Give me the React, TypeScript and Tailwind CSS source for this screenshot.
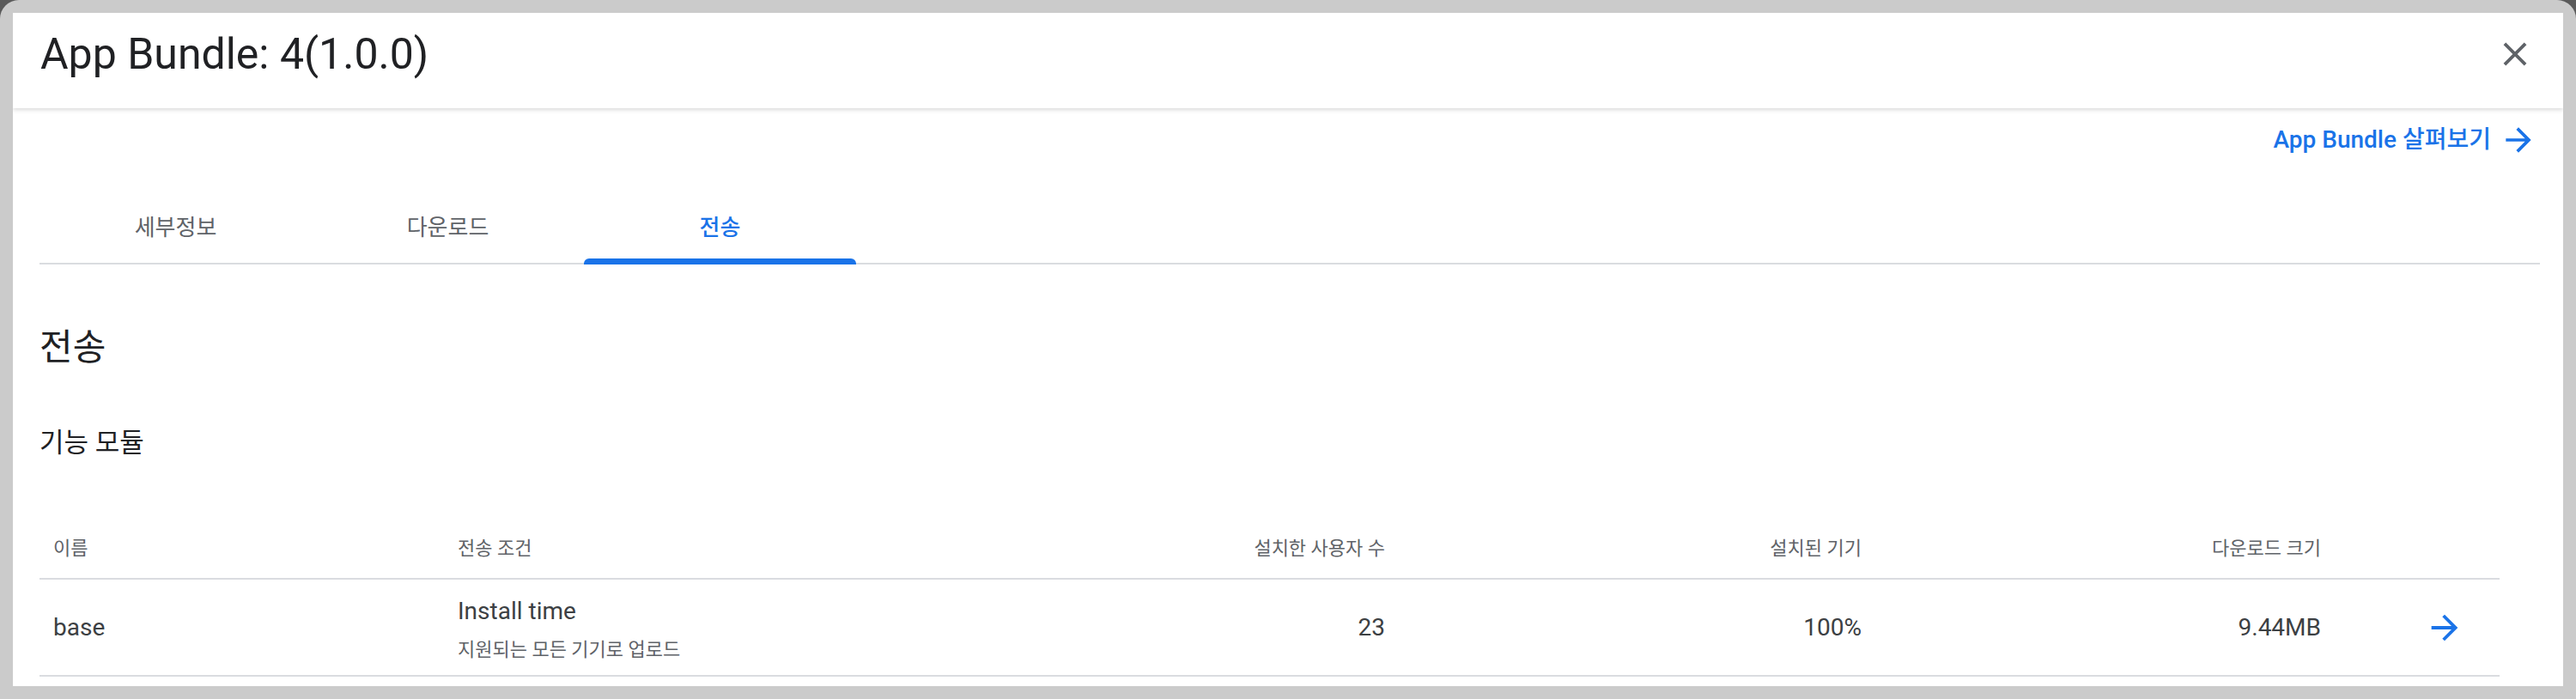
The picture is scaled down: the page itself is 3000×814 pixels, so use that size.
import React from "react";

const FONT = { fontFamily: 'Roboto, "Noto Sans CJK KR", sans-serif' };

function ArrowForward({ className }: { className?: string }) {
  return (
    <svg viewBox="0 0 24 24" className={className} fill="currentColor">
      <path d="M12 4l-1.41 1.41L16.17 11H4v2h12.17l-5.58 5.59L12 20l8-8z" />
    </svg>
  );
}

function CloseIcon({ className }: { className?: string }) {
  return (
    <svg viewBox="0 0 24 24" className={className} fill="currentColor">
      <path d="M19 6.41L17.59 5 12 10.59 6.41 5 5 6.41 10.59 12 5 17.59 6.41 19 12 13.41 17.59 19 19 17.59 13.41 12z" />
    </svg>
  );
}

export default function App() {
  const tabs = ["세부정보", "다운로드", "전송"];
  return (
    <div className="w-[3000px] h-[814px] bg-[#5a5a5a]" style={FONT}>
      <div className="w-full h-full bg-[#cbcbcb] rounded-t-[22px] p-[15px]">
        <div className="w-full h-full bg-white overflow-hidden flex flex-col">
          {/* Header */}
          <div className="h-[111px] shrink-0 flex items-start justify-between pl-[32px] pr-[28px] pt-[20px] shadow-[0_2px_5px_rgba(0,0,0,0.15)] relative z-10">
            <div className="h-[56px] flex items-center text-[50px] leading-[56px] text-[#202124]">
              App Bundle: 4(1.0.0)
            </div>
            <div className="h-[56px] w-[56px] flex items-center justify-center text-[#5f6368]">
              <CloseIcon className="w-[46px] h-[46px]" />
            </div>
          </div>

          {/* Link row */}
          <div className="flex justify-end pt-[17px] pr-[30px]">
            <div className="h-[40px] flex items-center gap-[10px] text-[#1a73e8] text-[28px] font-medium">
              <span>App Bundle 살펴보기</span>
              <ArrowForward className="w-[44px] h-[44px]" />
            </div>
          </div>

          {/* Tabs */}
          <div className="mt-[47px] ml-[31px] mr-[27px] flex border-b-2 border-[#dadce0] h-[78px]">
            {tabs.map((t, i) => {
              const active = i === 2;
              return (
                <div
                  key={t}
                  className={
                    "relative w-[317px] flex items-center justify-center text-[26px] " +
                    (active ? "text-[#1a73e8] font-medium" : "text-[#5f6368]")
                  }
                >
                  <span className="mt-[-6px]">{t}</span>
                  {active && (
                    <div className="absolute left-0 right-0 bottom-[-2px] h-[7px] bg-[#1a73e8] rounded-t-[6px]" />
                  )}
                </div>
              );
            })}
          </div>

          {/* Section */}
          <div className="pl-[31px]">
            <div className="mt-[69px] text-[42px] leading-[56px] text-[#202124]">전송</div>
            <div className="mt-[61px] text-[31px] leading-[44px] text-[#202124]">기능 모듈</div>

            {/* Table */}
            <div className="mt-[66px] w-[2865px]">
              <div className="grid grid-cols-[471px_512px_600px_555px_535px_192px] h-[71px] border-b-2 border-[#dadce0] text-[22px] text-[#5f6368] items-center">
                <div className="px-[16px]">이름</div>
                <div className="px-[16px]">전송 조건</div>
                <div className="px-[16px] text-right">설치한 사용자 수</div>
                <div className="px-[16px] text-right">설치된 기기</div>
                <div className="px-[16px] text-right">다운로드 크기</div>
                <div />
              </div>
              <div className="grid grid-cols-[471px_512px_600px_555px_535px_192px] h-[113px] border-b-2 border-[#dadce0] text-[28px] text-[#3c4043] items-center">
                <div className="px-[16px]">base</div>
                <div className="px-[16px] pt-[6px] flex flex-col gap-[11px]">
                  <span className="leading-[36px]">Install time</span>
                  <span className="leading-[32px] text-[22px] text-[#5f6368]">지원되는 모든 기기로 업로드</span>
                </div>
                <div className="px-[16px] text-right">23</div>
                <div className="px-[16px] text-right">100%</div>
                <div className="px-[16px] text-right">9.44MB</div>
                <div className="pl-[105px] flex items-center text-[#1a73e8]">
                  <ArrowForward className="w-[46px] h-[46px]" />
                </div>
              </div>
            </div>
          </div>
        </div>
      </div>
    </div>
  );
}
